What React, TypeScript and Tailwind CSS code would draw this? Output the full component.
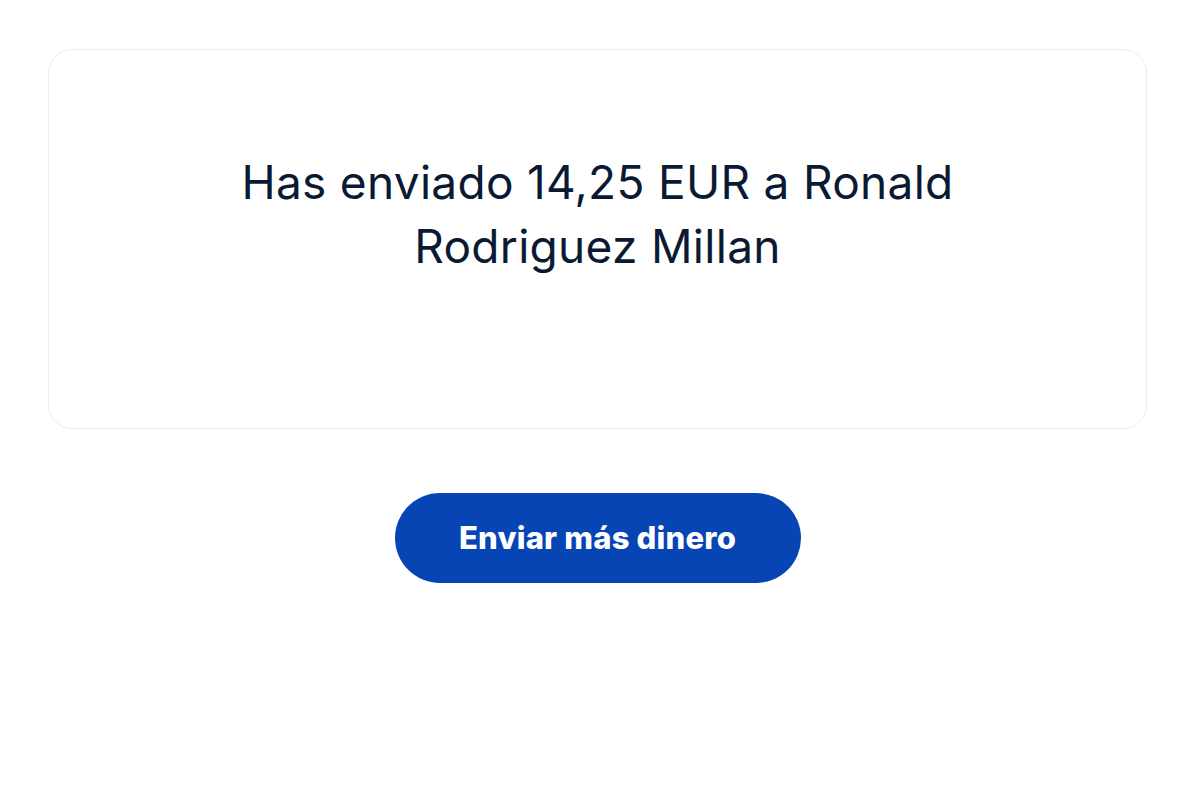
import React from 'react';

const App: React.FC = () => {
  return (
    <div className="min-h-screen bg-white pl-12 pr-[54px] pt-[49px]" style={{ fontFamily: 'Inter, "Liberation Sans", sans-serif' }}>
      <div className="flex h-[380px] items-center justify-center rounded-[24px] border border-[#ececec] px-10 pb-[50px]">
        <h1 className="max-w-[820px] text-center text-[46px] leading-[64px] font-normal tracking-[0.3px] text-[#0b1a33]">
          Has enviado 14,25 EUR a Ronald Rodriguez Millan
        </h1>
      </div>
      <div className="mt-[64px] flex justify-center">
        <button className="h-[90px] w-[406px] rounded-full bg-[#0845b4] text-[31px] font-extrabold tracking-[0.2px] text-white">
          Enviar más dinero
        </button>
      </div>
    </div>
  );
};

export default App;
